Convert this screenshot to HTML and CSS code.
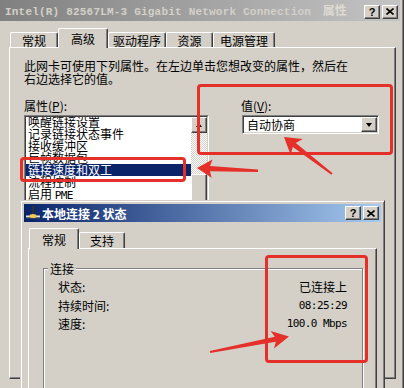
FILE: index.html
```html
<!DOCTYPE html>
<html lang="zh-CN">
<head>
	<meta charset="utf-8">
	<title>Intel(R) 82567LM-3 Gigabit Network Connection 属性</title>
	<link rel="stylesheet" href="styles.css">
</head>
<body>
	<div class="window props">
		<div class="titlebar inactive">
			<span class="title">Intel(R) 82567LM-3 Gigabit Network Connection <span class="cn">属性</span></span>
			<div class="caption-btns">
				<span class="cbtn">?</span>
				<span class="cbtn"><svg width="8" height="7" viewBox="0 0 8 7"><path d="M0.5 0.5l7 6M7.5 0.5l-7 6" stroke="#000" stroke-width="1.6"/></svg></span>
			</div>
		</div>
		<div class="tabs">
			<div class="tab tab-general">常规</div>
			<div class="tab sel tab-advanced">高级</div>
			<div class="tab tab-driver">驱动程序</div>
			<div class="tab tab-resource">资源</div>
			<div class="tab tab-power">电源管理</div>
		</div>
		<div class="panel panel-props">
			<p class="desc">此网卡可使用下列属性。在左边单击您想改变的属性，然后在<br>右边选择它的值。</p>
			<div class="fields">
				<div class="field-props">
					<label>属性(<u>P</u>):</label>
					<div class="listbox">
						<div class="listbox-in">
							<ul class="items">
								<li>唤醒链接设置</li>
								<li>记录链接状态事件</li>
								<li>接收缓冲区</li>
								<li>巨帧数据包</li>
								<li class="sel">链接速度和双工</li>
								<li>流程控制</li>
								<li>启用 <span class="mono">PME</span></li>
							</ul>
							<div class="vscroll">
								<span class="sbtn"><i class="tri-up"></i></span>
								<span class="track"></span>
								<span class="thumb"></span>
							</div>
						</div>
					</div>
				</div>
				<div class="field-value">
					<label>值(<u>V</u>):</label>
					<div class="combo">
						<span class="combo-text">自动协商</span>
						<span class="sbtn"><i class="tri-down"></i></span>
					</div>
				</div>
			</div>
		</div>
	</div>

	<div class="window status">
		<div class="titlebar active">
			<svg class="net-icon" width="16" height="16" viewBox="0 0 16 16">
				<path d="M8 1v9" stroke="#303030" stroke-width="2"/>
				<path d="M1 11.5h14" stroke="#e8e4dc" stroke-width="2"/>
				<path d="M1 13h14" stroke="#505050"/>
				<ellipse cx="8" cy="11" rx="3.5" ry="2" fill="#f0c850"/>
			</svg>
			<span class="title-cn">本地连接 2 状态</span>
			<div class="caption-btns">
				<span class="cbtn">?</span>
				<span class="cbtn"><svg width="8" height="7" viewBox="0 0 8 7"><path d="M0.5 0.5l7 6M7.5 0.5l-7 6" stroke="#000" stroke-width="1.6"/></svg></span>
			</div>
		</div>
		<div class="tabs">
			<div class="tab sel tab-status">常规</div>
			<div class="tab tab-support">支持</div>
		</div>
		<div class="panel panel-status">
			<fieldset class="group">
				<legend>连接</legend>
				<div class="stat-row"><span>状态:</span><span>已连接上</span></div>
				<div class="stat-row"><span>持续时间:</span><span class="mono">08:25:29</span></div>
				<div class="stat-row"><span>速度:</span><span class="mono">100.0 Mbps</span></div>
			</fieldset>
		</div>
	</div>

	<div class="notes">
		<div class="mark mark-value"></div>
		<div class="mark mark-item"></div>
		<div class="mark mark-stats"></div>
		<svg class="arrows" width="404" height="388" viewBox="0 0 404 388">
			<polygon points="197,168 212.5,159.5 210,166 258,169.5 258,172 210,171.2 211.6,177.8"/>
			<polygon points="284,137 302.8,138.9 295.8,142.9 332.6,173.2 331.4,174.8 292.8,146.9 290.6,154.7"/>
			<polygon points="289,336.5 270.6,331 274.8,336.7 209.8,351 210.2,353 275.8,341.7 274,348.6"/>
		</svg>
	</div>
</body>
</html>
```

FILE: styles.css
```css
*{
	margin: 0;
	padding: 0;
	box-sizing: border-box;
}

body{
	position: relative;
	width: 404px;
	height: 388px;
	overflow: hidden;
	background: #d4d0c8;
	font-family: "Noto Sans CJK SC", sans-serif;
	font-size: 12px;
	line-height: 13px;
	color: #000;
}

.mono{
	font-family: "DejaVu Sans Mono", monospace;
	font-size: 11px;
	letter-spacing: -.6px;
}

u{
	text-decoration: underline;
}

/* shared 3d look */
.cbtn,
.sbtn,
.thumb{
	background: #d4d0c8;
	border: 1px solid;
	border-color: #fff #404040 #404040 #fff;
	box-shadow: inset -1px -1px #808080;
}

/* back window */
.props{
	height: 388px;
	padding-right: 4px;
	box-shadow: inset -1px 0 #404040, inset -2px 0 #808080;
}

.titlebar{
	display: flex;
	align-items: center;
	padding: 0 2px 0 5px;
}

.titlebar.inactive{
	height: 21px;
	background: linear-gradient(to right, #808080, #c4c4c4);
	color: #d4d0c8;
}

.title{
	font-family: "Liberation Mono", monospace;
	font-weight: 700;
	font-size: 11px;
	letter-spacing: .2px;
	white-space: nowrap;
}

.title .cn{
	margin-left: 5px;
	font-family: "Noto Sans CJK SC", sans-serif;
	font-size: 12px;
	letter-spacing: 0;
	color: #dedad2;
}

.caption-btns{
	display: flex;
	gap: 2px;
	margin-left: auto;
	margin-top: 2px;
}

.cbtn{
	display: flex;
	align-items: center;
	justify-content: center;
	width: 16px;
	height: 14px;
	font: 700 11px "Liberation Sans", sans-serif;
	color: #000;
}

.tabs{
	position: relative;
	z-index: 1;
	display: flex;
	align-items: flex-end;
	height: 26px;
	padding-left: 10px;
}

.tab{
	display: flex;
	align-items: center;
	justify-content: center;
	height: 15px;
	background: #d4d0c8;
	border: 1px solid;
	border-bottom: 0;
	border-color: #fff #404040 #fff #fff;
	box-shadow: inset -1px 0 #808080;
	border-radius: 2px 2px 0 0;
	white-space: nowrap;
}

.tab.sel{
	height: 20px;
	margin-bottom: -1px;
}

.tab-general{ width: 48px; }
.tab-advanced{ width: 50px; }
.tab-driver{ width: 58px; }
.tab-resource{ width: 47px; }
.tab-power{ width: 62px; }

.panel{
	border: 1px solid;
	border-color: #fff #404040 #404040 #fff;
	box-shadow: inset -1px -1px #808080;
}

.panel-props{
	margin-left: 9px;
	width: 387px;
	height: 332px;
	padding: 11px 14px 0;
}

.fields{
	display: flex;
	margin-top: 14px;
}

.field-props{
	width: 185px;
}

.field-value{
	margin-left: 32px;
}

label{
	display: block;
}

.listbox{
	margin-top: 3px;
	height: 92px;
	border: 1px solid;
	border-color: #808080 #fff #fff #808080;
}

.listbox-in{
	display: flex;
	height: 100%;
	background: #fff;
	border: 1px solid;
	border-color: #404040 #d4d0c8 #d4d0c8 #404040;
}

.items{
	flex: 1;
	list-style: none;
	overflow: hidden;
}

.items li{
	height: 12px;
	line-height: 12px;
	padding-left: 2px;
	white-space: nowrap;
}

.items li:first-child{
	margin-top: -1px;
}

.items li.sel{
	background: #0a246a;
	color: #fff;
}

.vscroll{
	display: flex;
	flex-direction: column;
	width: 16px;
}

.sbtn{
	display: flex;
	align-items: center;
	justify-content: center;
	flex: none;
	width: 16px;
	height: 16px;
}

.track{
	height: 41px;
	background: repeating-conic-gradient(#fff 0 25%, #d4d0c8 0 50%) 0 0 / 2px 2px;
}

.thumb{
	flex: 1;
}

.tri-up,
.tri-down{
	width: 0;
	height: 0;
	border-left: 3.5px solid transparent;
	border-right: 3.5px solid transparent;
}

.tri-up{
	border-bottom: 4px solid #000;
}

.tri-down{
	border-top: 4px solid #000;
}

.combo{
	display: flex;
	align-items: center;
	margin: 3px 0 0 1px;
	width: 137px;
	height: 19px;
	padding: 1px;
	background: #fff;
	border: 1px solid;
	border-color: #808080 #fff #fff #808080;
	box-shadow: inset 1px 1px #404040, inset -1px -1px #d4d0c8;
}

.combo-text{
	flex: 1;
	padding-left: 3px;
}

.combo .sbtn{
	height: 15px;
}

/* front window, runs off the bottom of the shot */
.status{
	position: absolute;
	left: 20px;
	top: 200px;
	width: 365px;
	height: 188px;
	overflow: hidden;
	padding: 3px 3px 0;
	background: #d4d0c8;
	border: 1px solid;
	border-bottom: 0;
	border-color: #d4d0c8 #404040 #404040 #d4d0c8;
	box-shadow: inset 1px 1px #fff, inset -1px 0 #808080;
}

.titlebar.active{
	height: 18px;
	padding-left: 1px;
	background: linear-gradient(to right, #0a246a, #a6caf0);
	color: #fff;
}

.titlebar.active .caption-btns{
	margin-top: 0;
}

.net-icon{
	flex: none;
	margin-right: 1px;
}

.title-cn{
	font-weight: 700;
	white-space: nowrap;
}

.status .tabs{
	padding-left: 5px;
}

.status .tab{
	height: 16px;
}

.status .tab.sel{
	height: 21px;
}

.tab-status{ width: 50px; }
.tab-support{ width: 46px; }

.panel-status{
	margin-left: 4px;
	width: 349px;
	height: 150px;
	padding: 13px 13px 0 14px;
}

.group{
	width: 320px;
	height: 140px;
	padding: 5px 15px 0 14px;
	border: 1px solid #808080;
	box-shadow: inset 1px 1px #fff, 1px 1px #fff;
}

.group legend{
	margin-left: -10px;
	padding: 0 2px;
	background: #d4d0c8;
	line-height: 13px;
}

.stat-row{
	display: flex;
	justify-content: space-between;
	align-items: flex-start;
	height: 18.5px;
}

/* annotations drawn on top */
.notes{
	position: absolute;
	left: 0;
	top: 0;
	width: 404px;
	height: 388px;
	pointer-events: none;
}

.mark{
	position: absolute;
	border: 3px solid #e5302a;
	border-radius: 4px;
}

.mark-value{
	left: 197px;
	top: 84px;
	width: 196px;
	height: 71px;
}

.mark-item{
	left: 20px;
	top: 157px;
	width: 166px;
	height: 25px;
}

.mark-stats{
	left: 265px;
	top: 255px;
	width: 103px;
	height: 108px;
}

.arrows{
	position: absolute;
	left: 0;
	top: 0;
}

.arrows polygon{
	fill: #e5302a;
}
```
